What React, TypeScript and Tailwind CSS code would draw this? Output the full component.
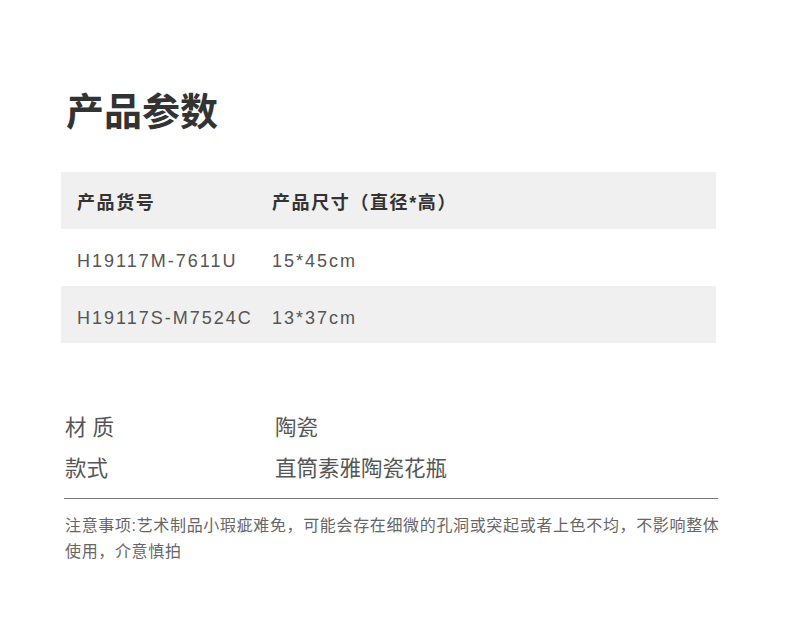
const font = "font-['Liberation_Sans','Noto_Sans_CJK_SC',sans-serif]"

const rows = [
  { code: 'H19117M-7611U', size: '15*45cm' },
  { code: 'H19117S-M7524C', size: '13*37cm' },
]

const specs = [
  { label: '材 质', value: '陶瓷' },
  { label: '款式', value: '直筒素雅陶瓷花瓶' },
]

export default function App() {
  return (
    <div className={`${font} min-h-[634px] w-[790px] bg-white pt-[93px]`}>
      <h1 className="ml-[66px] text-[38px] leading-[38px] font-bold text-[#333]">产品参数</h1>

      <div className="ml-[61px] mt-[41px] w-[655px] text-[18px]">
        <div className="flex h-[57px] items-center bg-[#f0f0f0] pt-[6px] font-bold tracking-[1.6px] text-[#333]">
          <div className="w-[211px] pl-[16px]">产品货号</div>
          <div>产品尺寸（直径*高）</div>
        </div>
        {rows.map((r, i) => (
          <div
            key={r.code}
            className={`flex h-[57px] items-center pt-[8px] tracking-[2px] text-[#555] ${i % 2 === 1 ? 'bg-[#f0f0f0]' : 'bg-white'}`}
          >
            <div className="w-[211px] pl-[16px]">{r.code}</div>
            <div>{r.size}</div>
          </div>
        ))}
      </div>

      <div className="ml-[65px] mt-[65px] text-[21.5px] leading-[41px] text-[#555]">
        {specs.map((s) => (
          <div key={s.label} className="flex">
            <div className="w-[210px]">{s.label}</div>
            <div>{s.value}</div>
          </div>
        ))}
      </div>

      <div className="ml-[64px] mt-[8px] w-[654px] border-t border-[#777]" />

      <p className="ml-[65px] mt-[14px] w-[660px] text-[16px] leading-[26px] tracking-[0.65px] text-[#666]">
        注意事项:艺术制品小瑕疵难免，可能会存在细微的孔洞或突起或者上色不均，不影响整体使用，介意慎拍
      </p>
    </div>
  )
}
